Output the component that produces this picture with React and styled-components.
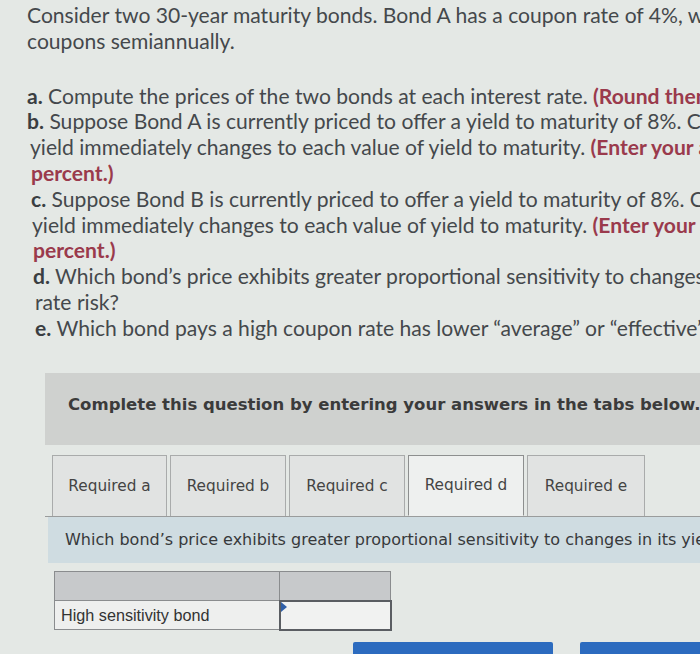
import React from 'react';
import styled, { createGlobalStyle } from 'styled-components';

const GlobalStyle = createGlobalStyle`
  html, body {
    margin: 0;
    padding: 0;
  }
  body {
    width: 700px;
    height: 654px;
    overflow: hidden;
    background: #e4e8e5;
  }
`;

const Page = styled.div`
  width: 700px;
  height: 654px;
  overflow: hidden;
  background: #e4e8e5;
  color: #44484c;
`;

// Problem statement
const Prompt = styled.section`
  padding: 2px 0 0 27px;
  font-family: Lato, "Open Sans", sans-serif;
  font-size: 21.1px;
  line-height: 25.8px;
  white-space: nowrap;
`;

const Line = styled.div`
  height: 25.8px;
  padding-left: ${({ $shift }) => $shift || 0}px;
  margin-top: ${({ $gap }) => $gap || 0}px;
`;

const Letter = styled.b`
  font-weight: 700;
  color: #3a3e42;
`;

const Note = styled.b`
  font-weight: 700;
  color: #9a3a4c;
`;

// Answer card
const Card = styled.section`
  margin: 32px 0 0 45px;
  font-family: "DejaVu Sans", Verdana, sans-serif;
`;

const Instructions = styled.div`
  height: 64px;
  display: flex;
  align-items: center;
  padding: 0 0 8px 23px;
  background: #cfd1cf;
  font-size: 16.5px;
  font-weight: 700;
  color: #3b3b3b;
  white-space: nowrap;
`;

const TabRow = styled.div`
  display: flex;
  gap: 3px;
  margin-top: 10px;
  padding-left: 7px;
  border-bottom: 1px solid #9a9c9c;
`;

const Tab = styled.button`
  width: ${({ $w }) => $w}px;
  height: 61px;
  margin-bottom: ${({ $active }) => ($active ? '-1px' : '0')};
  border: 1px solid ${({ $active }) => ($active ? '#8d8f8f' : '#a9abab')};
  border-bottom: ${({ $active }) => ($active ? '1px solid #eef0ef' : 'none')};
  background: ${({ $active }) => ($active ? '#eef0ef' : '#e1e3e2')};
  font-family: "DejaVu Sans", Verdana, sans-serif;
  font-size: 15.3px;
  color: #444;
  padding: 0;
`;

const Panel = styled.div`
  height: 46px;
  display: flex;
  align-items: center;
  margin-left: 3px;
  padding-left: 17px;
  background: #cfdce1;
  font-size: 16px;
  color: #37393b;
  white-space: nowrap;
`;

const Grid = styled.table`
  margin: 8px 0 0 9px;
  border-collapse: collapse;
  font-family: "Liberation Sans", Arial, sans-serif;
`;

const HeadCell = styled.td`
  width: ${({ $w }) => $w}px;
  height: 28px;
  padding: 0;
  background: #c7c9cb;
  border: 1px solid #8a8c8e;
`;

const LabelCell = styled.td`
  height: 28px;
  padding: 0 0 0 6px;
  background: #eeefee;
  border: 1px solid #8a8c8e;
  font-size: 16.2px;
  color: #333;
`;

const InputCell = styled.td`
  position: relative;
  padding: 0;
  background: #f1f2f1;
  border: 2px solid #5a5d62;
`;

const Marker = styled.span`
  position: absolute;
  top: 0;
  left: 0;
  width: 0;
  height: 0;
  border-top: 5px solid transparent;
  border-bottom: 5px solid transparent;
  border-left: 6px solid #2f5fa8;
`;

const ButtonRow = styled.div`
  display: flex;
  gap: 27px;
  margin: 11px 0 0 308px;
`;

const NavButton = styled.div`
  flex: 0 0 ${({ $w }) => $w}px;
  height: 30px;
  background: #2c6bbf;
  border-radius: 2px;
`;

const tabs = [
  { label: 'Required a', w: 115 },
  { label: 'Required b', w: 116 },
  { label: 'Required c', w: 116 },
  { label: 'Required d', w: 116, active: true },
  { label: 'Required e', w: 118 },
];

export default function App() {
  return (
    <Page>
      <GlobalStyle />
      <Prompt>
        <Line>Consider two 30-year maturity bonds. Bond A has a coupon rate of 4%, while Bond B has a coupon rate of 12%. Both bonds pay</Line>
        <Line>coupons semiannually.</Line>

        <Line $gap={29}>
          <Letter>a.</Letter> Compute the prices of the two bonds at each interest rate. <Note>(Round them to 2 decimal places.)</Note>
        </Line>
        <Line>
          <Letter>b.</Letter> Suppose Bond A is currently priced to offer a yield to maturity of 8%. Calculate the percentage change in price if its
        </Line>
        <Line $shift={3}>
          yield immediately changes to each value of yield to maturity. <Note>(Enter your answers as a percent rounded to 2 decimal places.)</Note>
        </Line>
        <Line $shift={4}>
          <Note>percent.)</Note>
        </Line>
        <Line $shift={4}>
          <Letter>c.</Letter> Suppose Bond B is currently priced to offer a yield to maturity of 8%. Calculate the percentage change in price if its
        </Line>
        <Line $shift={5}>
          yield immediately changes to each value of yield to maturity. <Note>(Enter your answers as a percent rounded to 2 decimal places.)</Note>
        </Line>
        <Line $shift={6}>
          <Note>percent.)</Note>
        </Line>
        <Line $shift={6}>
          <Letter>d.</Letter> Which bond’s price exhibits greater proportional sensitivity to changes in its yield? That is, which has more interest
        </Line>
        <Line $shift={8}>rate risk?</Line>
        <Line $shift={8}>
          <Letter>e.</Letter> Which bond pays a high coupon rate has lower “average” or “effective” maturity?
        </Line>
      </Prompt>

      <Card>
        <Instructions>Complete this question by entering your answers in the tabs below.</Instructions>
        <TabRow>
          {tabs.map((t) => (
            <Tab key={t.label} $w={t.w} $active={t.active}>
              {t.label}
            </Tab>
          ))}
        </TabRow>
        <Panel>Which bond’s price exhibits greater proportional sensitivity to changes in its yield?</Panel>
        <Grid>
          <tbody>
            <tr>
              <HeadCell $w={224} />
              <HeadCell $w={110} />
            </tr>
            <tr>
              <LabelCell>High sensitivity bond</LabelCell>
              <InputCell>
                <Marker />
              </InputCell>
            </tr>
          </tbody>
        </Grid>
        <ButtonRow>
          <NavButton $w={200} />
          <NavButton $w={130} />
        </ButtonRow>
      </Card>
    </Page>
  );
}
